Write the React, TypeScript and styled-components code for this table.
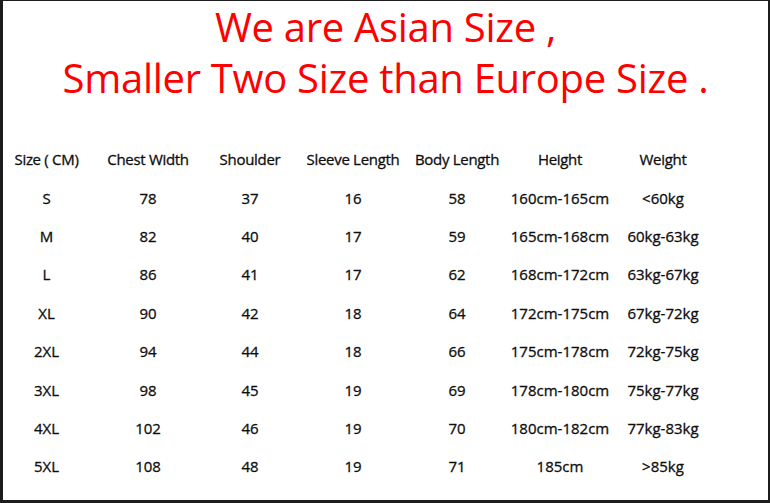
import React from "react";
import styled, { createGlobalStyle } from "styled-components";

const Global = createGlobalStyle`
  html, body { margin: 0; padding: 0; background: #ffffff; }
  body { font-family: "Open Sans", "Noto Sans", sans-serif; }
`;

const Frame = styled.div`
  box-sizing: border-box;
  width: 770px;
  height: 503px;
  border-style: solid;
  border-color: #1c1c1c;
  border-width: 1px 2px 3px 3px;
  background: #ffffff;
  display: flex;
  flex-direction: column;
  overflow: hidden;
`;

const Title = styled.h1`
  margin: 0;
  padding-top: 0;
  font-family: "Open Sans", sans-serif;
  font-weight: 400;
  font-size: 40px;
  line-height: 51px;
  letter-spacing: -0.3px;
  color: #ff0000;
  text-align: center;
`;

const Table = styled.div`
  margin-top: 37px;
  display: grid;
  grid-template-columns: 87px 116px 88px 118px 90px 116px 90px;
  grid-auto-rows: 38.4px;
  align-items: center;
  font-family: "Open Sans", sans-serif;
  font-size: 15px;
  font-weight: 400;
  color: #0e0e0e;
  -webkit-text-stroke: 0.3px #0e0e0e;
`;

const Cell = styled.div<{ $head?: boolean }>`
  text-align: center;
  white-space: nowrap;
  letter-spacing: ${(p) => (p.$head ? "-0.3px" : "0")};
`;

const header = ["Size ( CM)", "Chest Width", "Shoulder", "Sleeve Length", "Body Length", "Height", "Weight"];

const rows: string[][] = [
  ["S", "78", "37", "16", "58", "160cm-165cm", "<60kg"],
  ["M", "82", "40", "17", "59", "165cm-168cm", "60kg-63kg"],
  ["L", "86", "41", "17", "62", "168cm-172cm", "63kg-67kg"],
  ["XL", "90", "42", "18", "64", "172cm-175cm", "67kg-72kg"],
  ["2XL", "94", "44", "18", "66", "175cm-178cm", "72kg-75kg"],
  ["3XL", "98", "45", "19", "69", "178cm-180cm", "75kg-77kg"],
  ["4XL", "102", "46", "19", "70", "180cm-182cm", "77kg-83kg"],
  ["5XL", "108", "48", "19", "71", "185cm", ">85kg"],
];

export default function App() {
  return (
    <>
      <Global />
      <Frame>
        <Title>
          We are Asian Size ,
          <br />
          Smaller Two Size than Europe Size .
        </Title>
        <Table>
          {header.map((h) => (
            <Cell key={h} $head>
              {h}
            </Cell>
          ))}
          {rows.map((r, i) =>
            r.map((c, j) => <Cell key={`${i}-${j}`}>{c}</Cell>)
          )}
        </Table>
      </Frame>
    </>
  );
}
